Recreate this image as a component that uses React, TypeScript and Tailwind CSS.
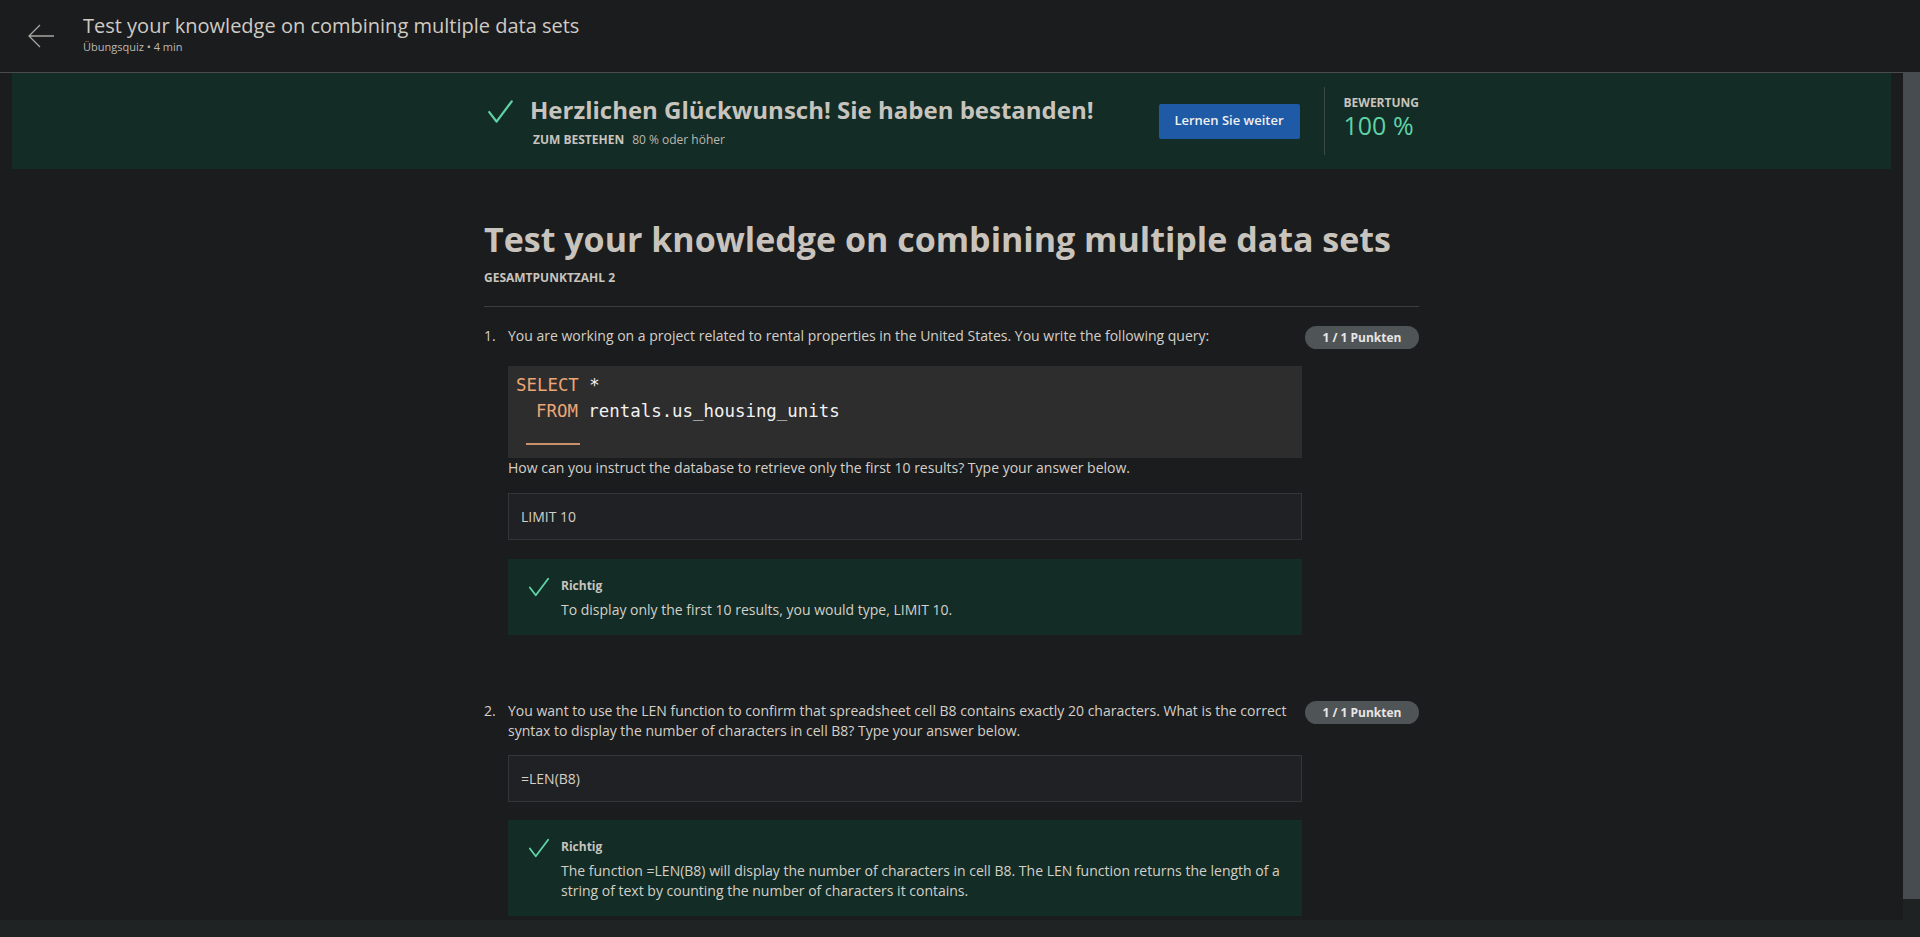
import React from "react";

function Check({ className = "" }: { className?: string }) {
  return (
    <svg viewBox="0 0 24 24" className={className} fill="none" stroke="currentColor" strokeWidth={2}>
      <path d="M2 12.5 8.5 21 22 3" strokeLinecap="round" strokeLinejoin="round" />
    </svg>
  );
}

function Badge() {
  return (
    <span className="shrink-0 h-[23px] w-[114px] rounded-full bg-[#4f5457] text-[12px] font-bold text-[#e8e6e3] flex items-center justify-center">
      1 / 1 Punkten
    </span>
  );
}

function Feedback({ lines }: { lines: string[] }) {
  return (
    <div className="bg-[#132c25] pl-[20px] pr-[16px] pt-[19px] pb-[15px] flex">
      <Check className="w-[22px] h-[22px] text-[#5fd3a5] mt-[-2px] mr-[11px]" />
      <div>
        <p className="text-[12px] font-bold text-[#c8c4bd] leading-[16px]">Richtig</p>
        <p className="text-[14px] text-[#d4d0c9] leading-[20px] mt-[6px]">
          {lines.map((l, i) => (
            <span key={i} className="block">
              {l}
            </span>
          ))}
        </p>
      </div>
    </div>
  );
}

export default function App() {
  return (
    <div className="h-[937px] w-full bg-[#1b1c1e] flex flex-col overflow-hidden font-['Open_Sans','Liberation_Sans',sans-serif] text-[#d4d0c9]">
      <header className="h-[73px] shrink-0 border-b border-[#4a4b4d] flex items-center">
        <svg viewBox="0 0 28 24" className="w-[28px] h-[24px] ml-[27px] mr-[28px] text-[#a9a59e]" fill="none" stroke="currentColor" strokeWidth={1.3}>
          <path d="M27 12H2M13 1 2 12l11 11" />
        </svg>
        <div className="mt-[-6px]">
          <h1 className="text-[20px] leading-[28px] text-[#cfcbc4]">Test your knowledge on combining multiple data sets</h1>
          <p className="text-[11px] leading-[14px] text-[#bdb8b0]">Übungsquiz • 4 min</p>
        </div>
      </header>

      <div className="flex flex-1 min-h-0">
        <main className="flex-1 overflow-hidden">
          <section className="mx-[12px] h-[96px] bg-[#132c25] flex justify-center">
            <div className="w-[935px] flex items-center">
              <Check className="w-[27px] h-[27px] text-[#5fd3a5] ml-[3px] mt-[-19px] mr-[16px]" />
              <div className="flex-1">
                <h2 className="text-[24px] font-bold leading-[32px] text-[#c8c4bd]">
                  Herzlichen Glückwunsch! Sie haben bestanden!
                </h2>
                <p className="text-[12px] leading-[16px] mt-[6px] ml-[3px] text-[#bdb8b0]">
                  <span className="font-bold text-[#c8c4bd] mr-[8px]">ZUM BESTEHEN</span>80 % oder höher
                </p>
              </div>
              <button className="h-[35px] w-[141px] bg-[#1f5aa6] rounded-[2px] text-[13px] font-semibold text-[#f0f0f0] mr-[24px]">
                Lernen Sie weiter
              </button>
              <div className="self-stretch my-[14px] border-l border-[#3a4a45] pl-[19px] flex flex-col justify-center">
                <span className="text-[12px] font-bold text-[#c8c4bd] leading-[14px] mt-[-6px]">BEWERTUNG</span>
                <span className="text-[25px] leading-[30px] text-[#5fd3a5]">100 %</span>
              </div>
            </div>
          </section>

          <div className="w-[935px] mx-auto">
            <h1 className="mt-[48px] text-[34px] font-bold leading-[44px] text-[#c8c4bd]">
              Test your knowledge on combining multiple data sets
            </h1>
            <p className="mt-[9px] text-[12px] font-bold text-[#c8c4bd] leading-[16px]">GESAMTPUNKTZAHL 2</p>
            <div className="mt-[20px] border-t border-[#3d3e40]" />

            <div className="mt-[19px] flex">
              <span className="w-[24px] shrink-0 text-[14px] leading-[20px]">1.</span>
              <div className="flex-1">
                <div className="flex items-start justify-between">
                  <p className="text-[14px] leading-[20px] pr-[16px]">
                    You are working on a project related to rental properties in the United States. You write the following query:
                  </p>
                  <Badge />
                </div>
                <div className="w-[794px] mt-[17px] bg-[#2d2d2d] pt-[6px] pb-[13px] pl-[8px] font-['DejaVu_Sans_Mono','Liberation_Mono',monospace] text-[17.4px] leading-[26px] text-[#f2f2f2]">
                  <div>
                    <span className="text-[#eba676]">SELECT</span> *
                  </div>
                  <div>
                    <span className="text-[#eba676] ml-[20px]">FROM</span> rentals.us_housing_units
                  </div>
                  <div className="ml-[10px] mt-[19px] w-[54px] h-[2px] bg-[#c99169]" />
                </div>
                <p className="text-[14px] leading-[20px]">
                  How can you instruct the database to retrieve only the first 10 results? Type your answer below.
                </p>
                <div className="w-[794px] mt-[15px] h-[47px] bg-[#202124] border border-[#333538] flex items-center px-[12px] text-[14px]">
                  LIMIT 10
                </div>
                <div className="w-[794px] mt-[19px]">
                  <Feedback lines={["To display only the first 10 results, you would type, LIMIT 10."]} />
                </div>
              </div>
            </div>

            <div className="mt-[66px] flex">
              <span className="w-[24px] shrink-0 text-[14px] leading-[20px]">2.</span>
              <div className="flex-1">
                <div className="flex items-start justify-between">
                  <p className="text-[14px] leading-[20px] w-[794px] pr-[12px]">
                    You want to use the LEN function to confirm that spreadsheet cell B8 contains exactly 20 characters. What is the correct syntax to display the number of characters in cell B8? Type your answer below.
                  </p>
                  <Badge />
                </div>
                <div className="w-[794px] mt-[14px] h-[47px] bg-[#202124] border border-[#333538] flex items-center px-[12px] text-[14px]">
                  =LEN(B8)
                </div>
                <div className="w-[794px] mt-[18px]">
                  <Feedback
                    lines={[
                      "The function =LEN(B8) will display the number of characters in cell B8. The LEN function returns the length of a",
                      "string of text by counting the number of characters it contains.",
                    ]}
                  />
                </div>
              </div>
            </div>
          </div>
        </main>
        <div className="w-[17px] shrink-0 flex flex-col">
          <div className="flex-1 bg-[#474c50]" />
          <div className="h-[21px] bg-[#1f2222]" />
        </div>
      </div>
      <div className="h-[17px] shrink-0 bg-[#202323]" />
    </div>
  );
}
